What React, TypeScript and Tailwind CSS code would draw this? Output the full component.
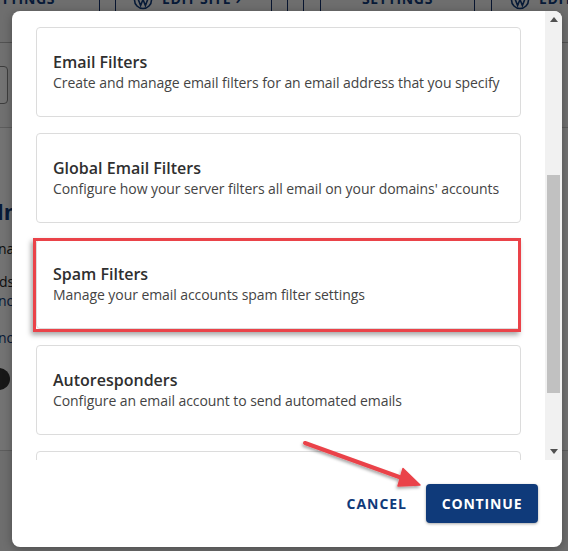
import React from "react";

type Filter = { title: string; desc: string; marked?: boolean };

const filters: Filter[] = [
  { title: "Email Filters", desc: "Create and manage email filters for an email address that you specify" },
  { title: "Global Email Filters", desc: "Configure how your server filters all email on your domains' accounts" },
  { title: "Spam Filters", desc: "Manage your email accounts spam filter settings", marked: true },
  { title: "Autoresponders", desc: "Configure an email account to send automated emails" },
  { title: "Forwarders", desc: "Send a copy of any incoming email from one address to another" },
];

const WpIcon = () => (
  <svg width="20" height="20" viewBox="0 0 20 20" className="shrink-0">
    <circle cx="10" cy="10" r="8.5" fill="none" stroke="currentColor" strokeWidth="1.6" />
    <path d="M4.5 7.5 L7.6 15.5 L10 9.5 L12.4 15.5 L15.5 7.5" fill="none" stroke="currentColor" strokeWidth="1.6" />
  </svg>
);

const Tab = ({ w, children, className = "" }: { w: string; children?: React.ReactNode; className?: string }) => (
  <div className={`${w} shrink-0 h-full border-r border-[#12306a] flex items-start ${className}`}>{children}</div>
);

const FilterCard = ({ item }: { item: Filter }) => (
  <div className="relative h-[90px] shrink-0 rounded-[4px] border border-[#dcdcdc] bg-white px-4 flex flex-col justify-center">
    <h3 className="text-[16px] leading-[22px] font-semibold text-[#2f2f2f]">{item.title}</h3>
    <p className="text-[14px] leading-[20px] text-[#444] whitespace-nowrap tracking-[-0.005em]">{item.desc}</p>
    {item.marked && (
      <div className="absolute -left-[4px] -top-[2px] -bottom-[4px] -right-[1px] border-[3px] border-[#ea4349] shadow-[-2px_3px_5px_rgba(0,0,0,0.35)]" />
    )}
  </div>
);

export default function App() {
  return (
    <div className="relative w-[568px] h-[551px] overflow-hidden bg-white" style={{ fontFamily: "'Open Sans', sans-serif" }}>
      {/* page behind the dialog */}
      <div className="flex flex-col h-full">
        <div className="h-[43px] shrink-0 flex border-b border-[#b5b5b5] bg-[#f4f4f4] text-[#103a7a] text-[14px] font-bold tracking-wider overflow-hidden">
          <Tab w="w-[100px]"><span className="-ml-[16px] -mt-[12px] whitespace-nowrap">SETTINGS</span></Tab>
          <Tab w="w-[16px]" />
          <Tab w="w-[156px]" className="gap-[9px] pl-[17px] -mt-[10px] h-[53px]">
            <WpIcon />
            <span className="whitespace-nowrap -mt-[2px]">EDIT SITE ›</span>
          </Tab>
          <Tab w="w-[16px]" />
          <Tab w="w-[16px]" />
          <Tab w="w-[17px]" />
          <Tab w="w-[154px]" className="justify-center"><span className="-mt-[12px]">SETTINGS</span></Tab>
          <Tab w="w-[17px]" />
          <div className="flex-1 flex items-start gap-[9px] pl-[18px] -mt-[10px]">
            <WpIcon />
            <span className="whitespace-nowrap -mt-[2px]">EDIT SITE</span>
          </div>
        </div>
        <div className="h-[85px] shrink-0 border-b border-[#cfcfcf] bg-[#f8f8f8] flex items-center">
          <div className="w-[30px] h-[38px] -ml-[22px] rounded-[4px] border border-[#888] bg-white" />
        </div>
        <div className="flex-1 flex flex-col bg-white text-[#103a7a]">
          <div className="mt-[72px] -ml-[3px] text-[22px] font-bold leading-none">ln</div>
          <div className="mt-[16px] -ml-[2px] text-[14px] text-[#222]">na</div>
          <div className="mt-[14px] -ml-[1px] text-[14px] text-[#222] leading-[18px]">ds</div>
          <div className="-ml-[2px] text-[14px] leading-[20px]">no</div>
          <div className="mt-[16px] -ml-[2px] text-[14px]">no</div>
          <div className="mt-[20px] -ml-[12px] w-[22px] h-[22px] rounded-full bg-[#333]" />
          <div className="mt-[60px] border-t border-[#cfcfcf]" />
          <div className="flex-1 bg-[#f4f4f4]" />
        </div>
      </div>

      {/* dim overlay */}
      <div className="absolute inset-0 bg-black/55" />

      {/* dialog */}
      <div className="absolute left-[12px] top-[11px] w-[550px] h-[536px] rounded-[8px] bg-white overflow-hidden flex flex-col shadow-[0_2px_10px_rgba(0,0,0,0.3)]">
        <div className="h-[449px] shrink-0 flex">
          <div className="flex-1 overflow-hidden px-6 pt-4 flex flex-col gap-4">
            {filters.map((f) => (
              <FilterCard key={f.title} item={f} />
            ))}
          </div>
          <div className="w-[17px] shrink-0 bg-[#f1f1f1] flex flex-col">
            <div className="h-[17px] flex items-center justify-center">
              <svg width="8" height="5" viewBox="0 0 8 5"><path d="M0 5 L4 0 L8 5 Z" fill="#505050" /></svg>
            </div>
            <div className="flex-1">
              <div className="mt-[147px] mx-[2px] h-[218px] bg-[#c1c1c1]" />
            </div>
            <div className="h-[17px] flex items-center justify-center">
              <svg width="8" height="5" viewBox="0 0 8 5"><path d="M0 0 L8 0 L4 5 Z" fill="#505050" /></svg>
            </div>
          </div>
        </div>
        <div className="flex-1 flex items-center justify-end gap-[19px] px-6">
          <button className="text-[14px] font-bold tracking-[0.07em] text-[#103a7a]">CANCEL</button>
          <button className="h-[39px] w-[112px] rounded-[4px] bg-[#0f3a7a] text-white text-[14px] font-bold tracking-[0.06em] shadow-[0_1px_3px_rgba(0,0,0,0.35)]">
            CONTINUE
          </button>
        </div>
      </div>

      {/* annotation arrow */}
      <svg className="absolute inset-0 pointer-events-none" width="568" height="551" viewBox="0 0 568 551">
        <defs>
          <filter id="sh" x="-20%" y="-20%" width="140%" height="140%">
            <feDropShadow dx="-1" dy="2" stdDeviation="1.5" floodColor="#000" floodOpacity="0.35" />
          </filter>
        </defs>
        <g filter="url(#sh)">
          <line x1="305" y1="443" x2="402" y2="478" stroke="#ea4349" strokeWidth="4" strokeLinecap="round" />
          <path d="M420 485 L403 468.5 L398 486 Z" fill="#ea4349" stroke="#ea4349" strokeWidth="1.5" strokeLinejoin="round" />
        </g>
      </svg>
    </div>
  );
}
